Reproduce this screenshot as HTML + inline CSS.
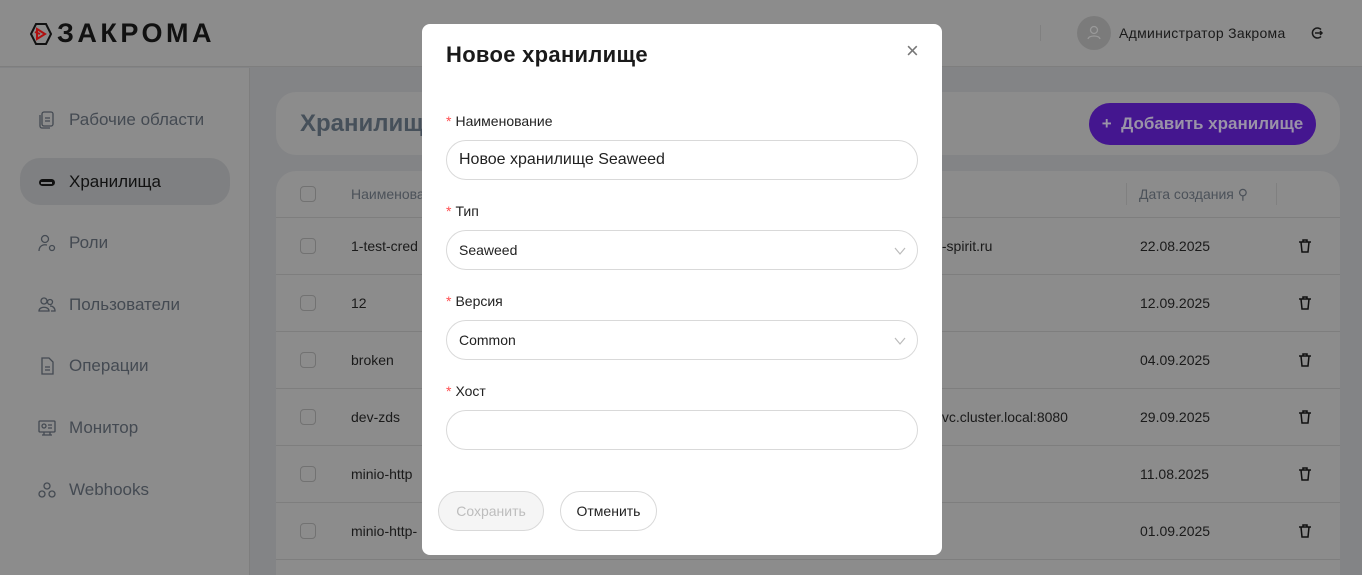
<!DOCTYPE html>
<html style="overflow:hidden;height:575px"><head><meta charset="utf-8"><style>
*{box-sizing:border-box;margin:0;padding:0}
body{width:1362px;height:575px;overflow:hidden;font-family:"Liberation Sans",sans-serif;background:#838486;position:relative;color:#1e1e1e}
.hdr{position:absolute;left:0;top:0;width:1362px;height:67px;background:#8c8c8c;border-bottom:1px solid #7e7e7e}
.side{position:absolute;left:0;top:68px;width:250px;height:507px;background:#8c8c8c;border-right:1px solid #7e7e7e}
.nav{position:absolute;left:20px;width:210px;height:47px;border-radius:20px;display:flex;align-items:center;padding-left:18px;font-size:17px;color:#444a52}
.nav svg{width:18px;height:18px;margin-right:13px}
.nav.act{background:#7f8082;color:#111}
.card{position:absolute;background:#8c8c8c;border-radius:20px}
.row{position:absolute;left:276px;width:1064px;height:57px;border-bottom:1px solid #7e7e7e;font-size:14px;color:#1a1a1a}
.row span{position:absolute;top:20px}
.row .tr{position:absolute;left:1022px;top:21px}
.cb{position:absolute;left:24px;top:20px;width:16px;height:16px;border:1px solid #727272;border-radius:4px}
.modal{position:absolute;left:422px;top:24px;width:520px;height:531px;background:#fff;border-radius:8px}
.lbl{position:absolute;left:24px;font-size:14px;color:#222}
.lbl b{color:#ff4d4f;font-weight:normal;margin-right:4px}
.inp{position:absolute;left:24px;width:472px;height:40px;border:1px solid #d9d9d9;border-radius:20px;padding-left:12px;display:flex;align-items:center;font-size:14px;color:#222}
.inp svg{position:absolute;right:10px;top:13px}
.btn{position:absolute;top:467px;height:40px;border-radius:20px;border:1px solid #d9d9d9;font-size:14px;display:flex;align-items:center;justify-content:center}
</style></head><body>
<div class="hdr">
 <svg style="position:absolute;left:30px;top:23px" width="22" height="22" viewBox="0 0 22 22"><polygon points="6,1 16,1 21,11 16,21 6,21 1,11" fill="none" stroke="#111" stroke-width="2"/><path d="M7 6 L15 11 L7 16 Z M5 9 L10 11" fill="none" stroke="#b01010" stroke-width="2"/></svg>
 <div style="position:absolute;left:57px;top:18px;font-size:27px;font-weight:bold;color:#111;letter-spacing:3.5px">ЗАКРОМА</div>
 <div style="position:absolute;left:1040px;top:25px;width:1px;height:16px;background:#808080"></div>
 <div style="position:absolute;left:1077px;top:16px;width:34px;height:34px;border-radius:50%;background:#7b7b7b"><svg width="34" height="34" viewBox="0 0 34 34"><circle cx="17" cy="14" r="3.5" fill="none" stroke="#999" stroke-width="1.3"/><path d="M11 23c1-4 11-4 12 0" fill="none" stroke="#999" stroke-width="1.3"/></svg></div>
 <div style="position:absolute;left:1119px;top:25px;font-size:14px;color:#1a1a1a;letter-spacing:0.3px">Администратор Закрома</div>
 <svg style="position:absolute;left:1310px;top:26px" width="14" height="14" viewBox="0 0 14 14"><path d="M11 3.5A5 5 0 1 0 11 10.5" fill="none" stroke="#1a1a1a" stroke-width="1.5"/><path d="M5 7h7M10 5l2 2-2 2" fill="none" stroke="#1a1a1a" stroke-width="1.5"/></svg>
</div>
<div class="side">
 <div class="nav" style="top:28px"><svg viewBox="0 0 18 18"><rect x="4" y="1" width="11" height="14" rx="2" fill="none" stroke="#444a52" stroke-width="1.3"/><path d="M2 4v11a2 2 0 0 0 2 2h8M7 7h5M7 10h5" fill="none" stroke="#444a52" stroke-width="1.3"/></svg>Рабочие области</div>
 <div class="nav act" style="top:90px"><svg viewBox="0 0 18 18"><rect x="1" y="6" width="16" height="7" rx="3.5" fill="#111"/><rect x="3" y="9" width="11" height="2" fill="#7f8082"/></svg>Хранилища</div>
 <div class="nav" style="top:151px"><svg viewBox="0 0 18 18"><circle cx="7" cy="5" r="3.5" fill="none" stroke="#444a52" stroke-width="1.3"/><path d="M1 17c0-5 4-7 8-6" fill="none" stroke="#444a52" stroke-width="1.3"/><circle cx="14" cy="14" r="2.5" fill="none" stroke="#444a52" stroke-width="1.3"/></svg>Роли</div>
 <div class="nav" style="top:213px"><svg viewBox="0 0 18 18"><circle cx="6" cy="5" r="3" fill="none" stroke="#444a52" stroke-width="1.3"/><circle cx="12" cy="6" r="2.5" fill="none" stroke="#444a52" stroke-width="1.3"/><path d="M1 15c0-5 10-5 10 0zM12 10c3 0 5 2 5 5h-4" fill="none" stroke="#444a52" stroke-width="1.3"/></svg>Пользователи</div>
 <div class="nav" style="top:274px"><svg viewBox="0 0 18 18"><path d="M4 1h7l4 4v12H4z" fill="none" stroke="#444a52" stroke-width="1.3"/><path d="M7 10h5M7 13h5" stroke="#444a52" stroke-width="1.3"/></svg>Операции</div>
 <div class="nav" style="top:336px"><svg viewBox="0 0 18 18"><rect x="1" y="2" width="16" height="11" rx="1" fill="none" stroke="#444a52" stroke-width="1.3"/><path d="M6 13v3M12 13v3M4 16h10M10 6h4M10 9h4" stroke="#444a52" stroke-width="1.3"/><circle cx="6" cy="7" r="2" fill="none" stroke="#444a52" stroke-width="1.3"/></svg>Монитор</div>
 <div class="nav" style="top:398px"><svg viewBox="0 0 18 18"><circle cx="9" cy="5" r="3" fill="none" stroke="#444a52" stroke-width="1.3"/><circle cx="4" cy="13" r="3" fill="none" stroke="#444a52" stroke-width="1.3"/><circle cx="14" cy="13" r="3" fill="none" stroke="#444a52" stroke-width="1.3"/></svg>Webhooks</div>
</div>
<div class="card" style="left:276px;top:92px;width:1064px;height:63px">
 <div style="position:absolute;left:24px;top:18px;font-size:24px;font-weight:bold;color:#46505a">Хранилища</div>
 <div style="position:absolute;left:813px;top:11px;width:227px;height:42px;border-radius:21px;background:#44168f;color:#9a93a8;font-size:17px;font-weight:bold;display:flex;align-items:center;justify-content:center">+&nbsp; Добавить хранилище</div>
</div>
<div class="card" style="left:276px;top:171px;width:1064px;height:404px;border-radius:20px 20px 0 0"></div>
<div class="row" style="top:171px;height:47px;color:#4c525a"><div class="cb" style="top:15px"></div><span style="left:75px;top:15px">Наименование</span><div style="position:absolute;left:850px;top:12px;width:1px;height:22px;background:#808080"></div><span style="left:863px;top:15px">Дата создания ⚲</span><div style="position:absolute;left:1000px;top:12px;width:1px;height:22px;background:#808080"></div></div>
<div class="row" style="top:218px"><div class="cb"></div><span style="left:75px">1-test-cred</span><span style="left:655px">al-spirit.ru</span><span style="left:864px">22.08.2025</span><svg class="tr" width="14" height="14" viewBox="0 0 14 14"><path d="M1 3h12M5 3V1h4v2M3 3l1 10h6l1-10" fill="none" stroke="#111" stroke-width="1.5"/></svg></div>
<div class="row" style="top:275px"><div class="cb"></div><span style="left:75px">12</span><span style="left:864px">12.09.2025</span><svg class="tr" width="14" height="14" viewBox="0 0 14 14"><path d="M1 3h12M5 3V1h4v2M3 3l1 10h6l1-10" fill="none" stroke="#111" stroke-width="1.5"/></svg></div>
<div class="row" style="top:332px"><div class="cb"></div><span style="left:75px">broken</span><span style="left:864px">04.09.2025</span><svg class="tr" width="14" height="14" viewBox="0 0 14 14"><path d="M1 3h12M5 3V1h4v2M3 3l1 10h6l1-10" fill="none" stroke="#111" stroke-width="1.5"/></svg></div>
<div class="row" style="top:389px"><div class="cb"></div><span style="left:75px">dev-zds</span><span style="left:655px">.svc.cluster.local:8080</span><span style="left:864px">29.09.2025</span><svg class="tr" width="14" height="14" viewBox="0 0 14 14"><path d="M1 3h12M5 3V1h4v2M3 3l1 10h6l1-10" fill="none" stroke="#111" stroke-width="1.5"/></svg></div>
<div class="row" style="top:446px"><div class="cb"></div><span style="left:75px">minio-http</span><span style="left:655px">u</span><span style="left:864px">11.08.2025</span><svg class="tr" width="14" height="14" viewBox="0 0 14 14"><path d="M1 3h12M5 3V1h4v2M3 3l1 10h6l1-10" fill="none" stroke="#111" stroke-width="1.5"/></svg></div>
<div class="row" style="top:503px"><div class="cb"></div><span style="left:75px">minio-http-</span><span style="left:655px">u</span><span style="left:864px">01.09.2025</span><svg class="tr" width="14" height="14" viewBox="0 0 14 14"><path d="M1 3h12M5 3V1h4v2M3 3l1 10h6l1-10" fill="none" stroke="#111" stroke-width="1.5"/></svg></div>
<div class="modal">
 <div style="position:absolute;left:24px;top:18px;font-size:22px;font-weight:bold;color:#1a1a1a;letter-spacing:0.3px">Новое хранилище</div>
 <div style="position:absolute;left:484px;top:16px;font-size:22px;color:#777;line-height:22px">×</div>
 <div class="lbl" style="top:89px"><b>*</b>Наименование</div>
 <div class="inp" style="top:116px;font-size:16px">Новое хранилище Seaweed</div>
 <div class="lbl" style="top:179px"><b>*</b>Тип</div>
 <div class="inp" style="top:206px">Seaweed<svg width="14" height="14" viewBox="0 0 14 14"><path d="M2 4l5 6 5-6" fill="none" stroke="#bbb" stroke-width="1.2"/></svg></div>
 <div class="lbl" style="top:269px"><b>*</b>Версия</div>
 <div class="inp" style="top:296px">Common<svg width="14" height="14" viewBox="0 0 14 14"><path d="M2 4l5 6 5-6" fill="none" stroke="#bbb" stroke-width="1.2"/></svg></div>
 <div class="lbl" style="top:359px"><b>*</b>Хост</div>
 <div class="inp" style="top:386px"></div>
 <div class="btn" style="left:16px;width:106px;background:#f5f5f5;color:#bdbdbd">Сохранить</div>
 <div class="btn" style="left:138px;width:97px;color:#222">Отменить</div>
</div>
</body></html>
